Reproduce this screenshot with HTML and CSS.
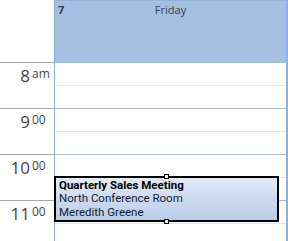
FILE: index.html
```html
<!DOCTYPE html>
<html>
<head>
<meta charset="utf-8">
<link rel="stylesheet" href="styles.css">
</head>
<body>
<div class="cal">
  <div class="gutter">
    <div class="corner"></div>
    <div class="hour"><span class="num">8</span><span class="sup">am</span></div>
    <div class="hour"><span class="num">9</span><span class="sup">00</span></div>
    <div class="hour"><span class="num">10</span><span class="sup">00</span></div>
    <div class="hour"><span class="num">11</span><span class="sup">00</span></div>
  </div>
  <div class="day">
    <div class="head"><span class="date">7</span><span class="dow">Friday</span></div>
    <div class="slot"></div>
    <div class="slot half"></div>
    <div class="slot"></div>
    <div class="slot half"></div>
    <div class="slot"></div>
    <div class="slot half"></div>
    <div class="slot"></div>
    <div class="slot half"></div>
    <div class="event">
      <div class="title">Quarterly Sales Meeting</div>
      <div class="line">North Conference Room</div>
      <div class="line">Meredith Greene</div>
      <span class="handle top"></span>
      <span class="handle bottom"></span>
    </div>
  </div>
</div>
</body>
</html>
```
FILE: styles.css
```css
html, body {
  margin: 0;
  padding: 0;
  background: #fff;
}
body {
  width: 288px;
  height: 241px;
  overflow: hidden;
  font-family: "Open Sans", "Noto Sans", sans-serif;
}
.cal {
  display: flex;
  height: 241px;
}
.gutter {
  width: 54px;
  flex: none;
}
.corner {
  height: 62px;
}
.hour {
  height: 45px;
  border-top: 1px solid #a3a9b3;
  display: flex;
  align-items: flex-start;
}
.num {
  width: 30px;
  text-align: right;
  font-size: 17px;
  line-height: 26px;
  color: #474747;
}
.sup {
  margin-left: 2px;
  font-size: 12px;
  line-height: 16px;
  padding-top: 3px;
  color: #474747;
}
.day {
  position: relative;
  flex: 1;
  border-left: 1px solid #8db0e0;
  border-right: 2px solid #8db0e0;
}
.head {
  height: 61px;
  background: #a5bfe1;
  border-top: 1px solid #94b3de;
  position: relative;
  font-size: 11px;
  color: #3c3c46;
}
.date {
  position: absolute;
  left: 3px;
  top: 1px;
  font-weight: bold;
}
.dow {
  display: block;
  text-align: center;
  padding-top: 1px;
}
.slot {
  height: 22px;
  border-top: 1px solid #a5bfe1;
}
.slot.half {
  border-top-color: #e6e7ec;
}
.event {
  position: absolute;
  left: -1px;
  top: 176px;
  width: 218px;
  height: 41px;
  border: 2px solid #000;
  background: linear-gradient(to bottom, #e2eaf6, #b8cce9);
  padding: 1px 0 0 3px;
  font-family: Roboto, "Open Sans", sans-serif;
  font-size: 11.5px;
  line-height: 13.4px;
  color: #141a33;
}
.title {
  font-weight: bold;
  color: #000;
}
.line {
  color: #141a33;
}
.handle {
  position: absolute;
  left: 108px;
  width: 5px;
  height: 5px;
  background: #fff;
  border: 1px solid #000;
  box-sizing: border-box;
}
.handle.top { top: -4px; }
.handle.bottom { bottom: -4px; }
```
